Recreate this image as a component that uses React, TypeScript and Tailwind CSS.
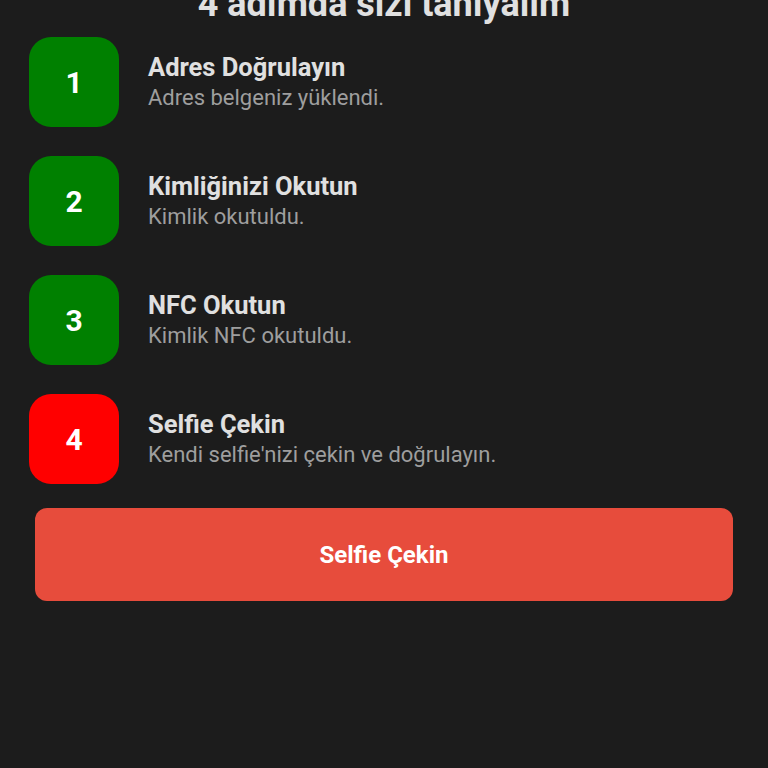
const steps = [
  { n: "1", title: "Adres Doğrulayın", desc: "Adres belgeniz yüklendi.", done: true },
  { n: "2", title: "Kimliğinizi Okutun", desc: "Kimlik okutuldu.", done: true },
  { n: "3", title: "NFC Okutun", desc: "Kimlik NFC okutuldu.", done: true },
  { n: "4", title: "Selfie Çekin", desc: "Kendi selfie'nizi çekin ve doğrulayın.", done: false },
];

export default function App() {
  return (
    <div
      className="w-[768px] h-[768px] overflow-hidden bg-[#1c1c1c]"
      style={{ fontFamily: "Roboto, 'Liberation Sans', sans-serif" }}
    >
      <h1 className="-mt-[17px] text-center text-[36px] leading-[42px] font-bold text-[#e0e0e0]">
        4 adımda sizi tanıyalım
      </h1>
      <div className="mt-[12px] flex flex-col gap-[29px] pl-[29px]">
        {steps.map((s) => (
          <div key={s.n} className="flex items-center">
            <div
              className={
                "w-[90px] h-[90px] rounded-[22px] flex items-center justify-center text-white text-[30px] font-bold " +
                (s.done ? "bg-[#008000]" : "bg-[#ff0000]")
              }
            >
              {s.n}
            </div>
            <div className="ml-[29px] flex flex-col">
              <div className="text-[25.5px] leading-[31px] font-bold text-[#e0e0e0]">{s.title}</div>
              <div className="text-[22px] leading-[29px] text-[#9e9e9e]">{s.desc}</div>
            </div>
          </div>
        ))}
      </div>
      <div className="px-[35px] mt-[24px]">
        <button className="w-full h-[93px] rounded-[12px] bg-[#e74c3c] text-white text-[24px] font-bold">
          Selfie Çekin
        </button>
      </div>
    </div>
  );
}
